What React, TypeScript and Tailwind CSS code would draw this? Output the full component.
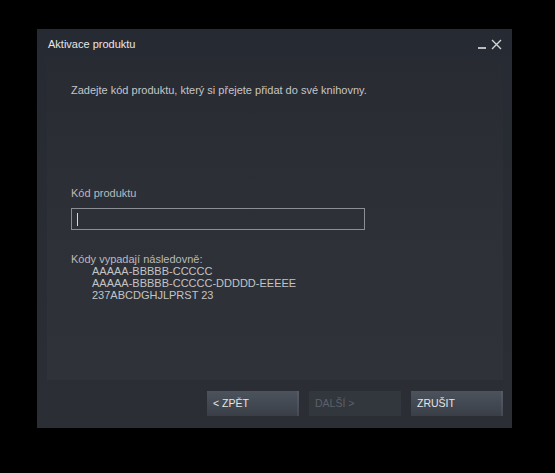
import React from 'react';

const font = { fontFamily: '"Liberation Sans", Arial, sans-serif' };

function DialogButton({ label, disabled }: { label: string; disabled?: boolean }) {
	return (
		<button
			disabled={disabled}
			className={`w-[92px] h-[25px] pl-[6px] text-left text-[10.5px] ${
				disabled
					? 'bg-[#32363d] text-[#5d6168]'
					: 'bg-gradient-to-b from-[#4c535d] to-[#3a3f47] text-[#e4e5e6] shadow-[inset_-2px_0_0_rgba(255,255,255,0.06)]'
			}`}
		>
			{label}
		</button>
	);
}

export default function App() {
	return (
		<div className="w-[555px] h-[473px] bg-black overflow-hidden pt-[29px] pl-[37px]" style={font}>
			<div className="w-[475px] h-[399px] flex flex-col bg-gradient-to-b from-[#262a32] via-[#292c33] to-[#2b2e34]">
				{/* Title bar */}
				<div className="h-[30px] flex items-center justify-between pl-[11px] pr-[10px] pt-[1px]">
					<span className="text-[11px] text-[#e6e7e8]">Aktivace produktu</span>
					<div className="flex items-end gap-[5px]">
						<div className="w-[8px] h-[2px] bg-[#b9bbbe] mb-[1px]" />
						<svg width="11" height="11" viewBox="0 0 11 11" className="stroke-[#d3d4d6]" strokeWidth="1.4" fill="none">
							<path d="M1 1l9 9M10 1l-9 9" />
						</svg>
					</div>
				</div>

				{/* Content panel */}
				<div className="ml-[10px] mr-[9px] h-[321px] bg-gradient-to-b from-[#282b32] via-[#2d3037] to-[#2f3238] pl-[24px] pt-[25px]">
					<p className="text-[11px] text-[#c5c6c8] leading-[13px]">
						Zadejte kód produktu, který si přejete přidat do své knihovny.
					</p>

					<p className="mt-[90px] text-[11px] text-[#b9babc] leading-[13px]">Kód produktu</p>

					<div className="mt-[8px] w-[294px] h-[22px] border border-[#8b8f95] flex items-center pl-[5px]">
						<div className="w-[1px] h-[13px] bg-[#d8d9da]" />
					</div>

					<div className="mt-[23px] text-[11px] text-[#b9babc] leading-[12px]">
						<p>Kódy vypadají následovně:</p>
						<div className="pl-[21px] text-[#c3c4c6]">
							<p>AAAAA-BBBBB-CCCCC</p>
							<p>AAAAA-BBBBB-CCCCC-DDDDD-EEEEE</p>
							<p>237ABCDGHJLPRST 23</p>
						</div>
					</div>
				</div>

				{/* Buttons */}
				<div className="mt-[11px] flex justify-end gap-[10px] pr-[9px]">
					<DialogButton label="< ZPĚT" />
					<DialogButton label="DALŠÍ >" disabled />
					<DialogButton label="ZRUŠIT" />
				</div>
			</div>
		</div>
	);
}
